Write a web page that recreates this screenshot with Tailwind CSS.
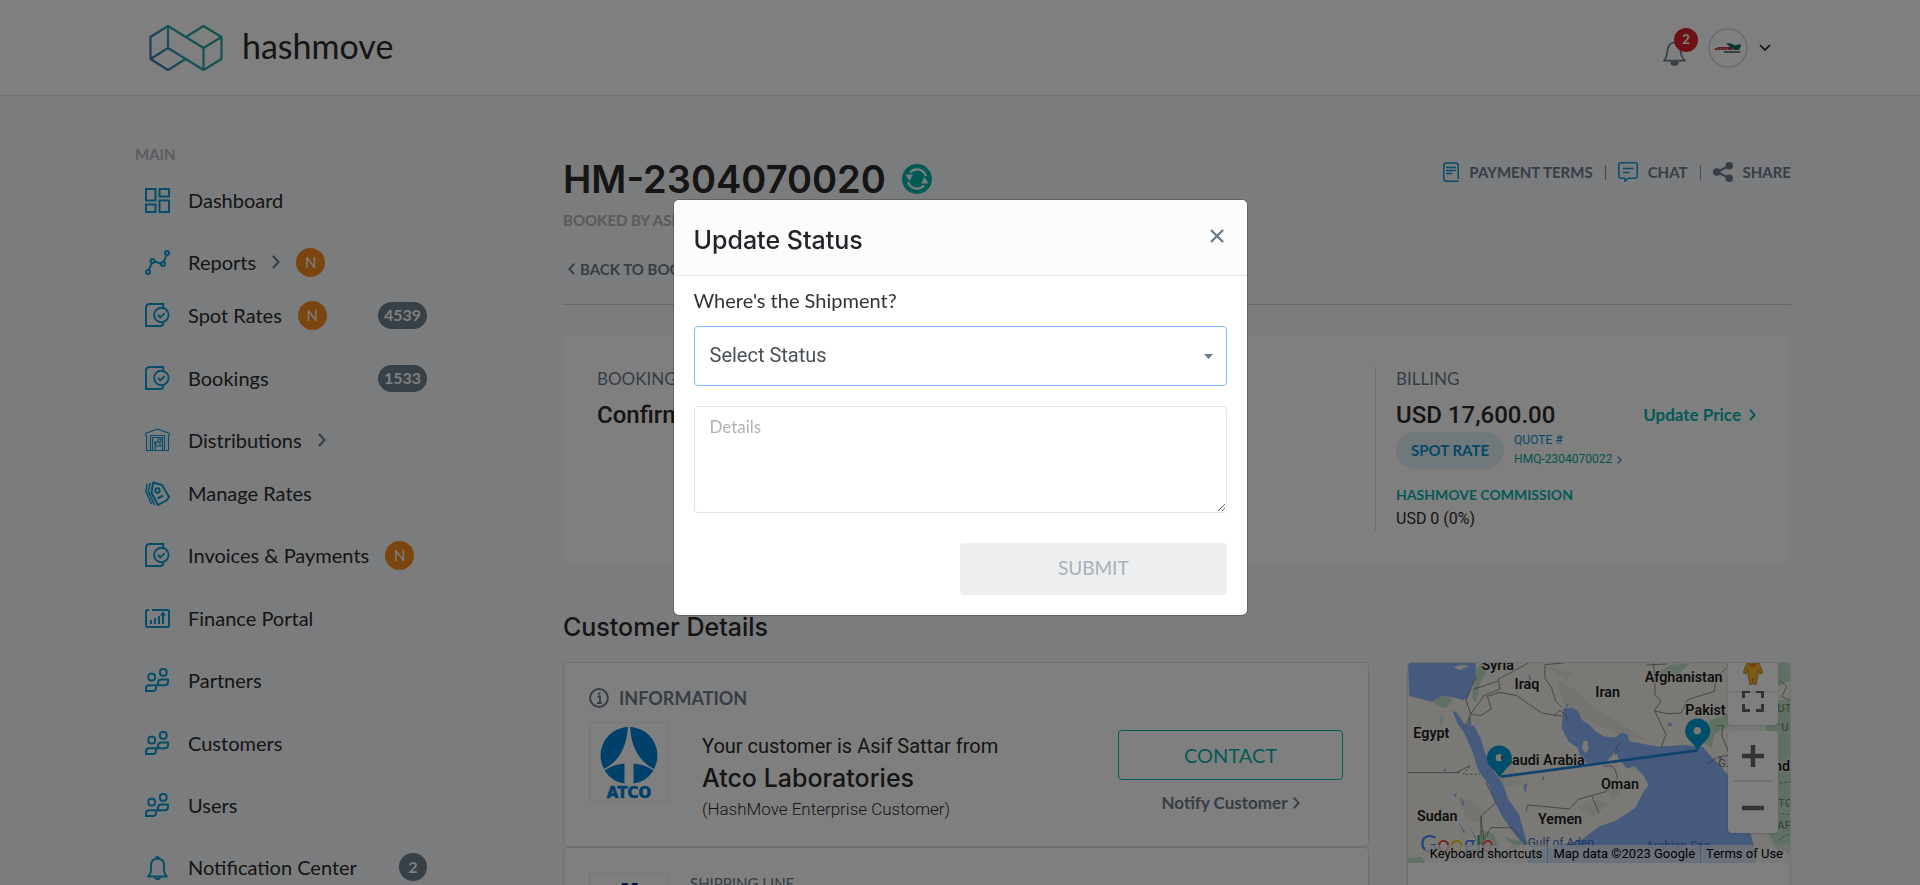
<!DOCTYPE html>
<html lang="en">
<head>
<meta charset="utf-8">
<meta name="viewport" content="width=device-width, initial-scale=1">
<title>HashMove - Booking HM-2304070020</title>
<script src="https://cdn.jsdelivr.net/npm/@tailwindcss/browser@4"></script>
</head>
<body class="h-screen overflow-hidden bg-[#f7f9fc] font-['Lato',sans-serif] text-[#2b2b2b]">

<svg class="hidden" aria-hidden="true">
  <symbol id="i-doc" viewBox="0 0 26 26"><g fill="none" stroke="currentColor" stroke-width="2"><path d="M19 5V1H5Q1 1 1 5V24H16Q19 24 19 20.500"/><circle cx="17" cy="12.500" r="7.500"/><path d="M13.500 12.500l2.500 2.500 4.500-4.500"/></g></symbol>
  <symbol id="i-people" viewBox="0 0 26 26"><g fill="none" stroke="currentColor" stroke-width="2"><rect x="15.500" y="1" width="7" height="7" rx="2.800"/><rect x="3.500" y="6" width="7" height="7" rx="2.800"/><path d="M13.500 18V15.500Q13.500 12 17 12H24V14.500Q24 18 20.500 18Z"/><path d="M1 24V21.500Q1 18 4.500 18H11.500V20.500Q11.500 24 8 24Z"/></g></symbol>
  <symbol id="i-right" viewBox="0 0 8 14"><path d="M1.500 1.500L6.500 7l-5 5.500" fill="none" stroke="currentColor" stroke-width="2.200" stroke-linecap="round" stroke-linejoin="round"/></symbol>
</svg>

<header class="flex h-24 items-center justify-between border-b border-[#dcdcdc] bg-white pl-[149px] pr-[149px]">
  <a href="#" class="flex items-center gap-[18px]" aria-label="hashmove home">
    <svg class="h-12 w-[75px]" viewBox="0 0 75 48" fill="none" stroke="url(#lg)" stroke-width="2.200" stroke-linejoin="round">
      <defs><linearGradient id="lg" gradientUnits="userSpaceOnUse" x1="0" y1="44" x2="74" y2="4"><stop offset="0" stop-color="#3c6fb6"/><stop offset=".45" stop-color="#2fa3b0"/><stop offset="1" stop-color="#1ea896"/></linearGradient></defs>
      <path d="M1.500 13L19 2l35.500 22v22L19 24 1.500 35Z"/><path d="M19 2v22M1.500 35L19 46l17.500-11M37 13L54.500 2 72.500 13 54.500 24M72.500 13v22L54.500 46"/>
    </svg>
    <span class="pb-1 text-[34px] leading-10 text-[#2b2b2b]">hashmove</span>
  </a>
  <div class="flex items-center">
    <button type="button" class="relative h-10 w-[26px] text-[#6f7f8f]" aria-label="Notifications, 2 new">
      <svg class="mt-[10px] h-[26px] w-[25px]" viewBox="0 0 26 26" fill="none" stroke="currentColor" stroke-width="1.800" stroke-linejoin="round"><path d="M2 21Q5 18 5.500 12 6 3 12.500 2 19 3 19.500 12 20 18 24 21Z"/><path d="M9.500 22.500a3.500 3 0 0 0 7 0Z" fill="currentColor"/></svg>
      <span class="absolute top-0 left-3 flex size-6 items-center justify-center rounded-full bg-[#d8232a] text-[13px] font-bold text-white">2</span>
    </button>
    <button type="button" class="ml-5 flex items-center gap-[11px]" aria-label="Account menu">
      <span class="flex size-10 items-center justify-center rounded-full border-2 border-[#dcdcdc] bg-white">
        <svg class="h-3 w-7" viewBox="0 0 28 12"><path d="M1 6.500L5 5H18v3H0Z" fill="#c0353a"/><path d="M12 1q6 0 9 2.500L26 2l1 2-2 4h-5l-3-2Z" fill="#12685f"/><path d="M10 10h16" stroke="#3b5560" stroke-width="1.500"/><path d="M3 7h12" stroke="#fff" stroke-width=".6" stroke-dasharray="2 1"/></svg>
      </span>
      <svg class="h-[7px] w-3" viewBox="0 0 12 7" fill="none" stroke="#222" stroke-width="1.700"><path d="M1 1l5 5 5-5"/></svg>
    </button>
  </div>
</header>

<div class="flex">
  <nav class="w-[563px] shrink-0 pt-12 pl-[135px]" aria-label="Main">
    <h2 class="text-[15px] leading-5 font-bold text-[#b4b8bc]">MAIN</h2>
    <ul class="mt-[5px] w-[292px] text-[20px] leading-[26px]">
      <li class="h-[62px] pt-[18px]"><a href="#" class="flex h-[26px] items-center"><svg class="mr-[18px] ml-[10px] size-[25px] text-[#0a9bd0]" viewBox="0 0 25 25" fill="none" stroke="currentColor" stroke-width="2"><path d="M1 1h9.500v11.500H1ZM14.500 1H24v7.500h-9.500ZM1 16.500h9.500V24H1ZM14.500 12.500H24V24h-9.500Z"/></svg>Dashboard</a></li>
      <li class="h-[53px] pt-[18px]"><a href="#" class="flex h-[26px] items-center"><svg class="mr-[18px] ml-[10px] size-[25px] text-[#0a9bd0]" viewBox="0 0 25 25" fill="none" stroke="currentColor" stroke-width="2"><circle cx="3" cy="22" r="2"/><circle cx="7.500" cy="11" r="2"/><circle cx="18" cy="14" r="2"/><circle cx="22" cy="3" r="2"/><path d="M3.800 20L7 13M9.500 11.500l6.500 2M18.800 12L21.500 5"/></svg>Reports<svg class="ml-4 h-[14px] w-2 text-[#6b7c8c]"><use href="#i-right"/></svg><span class="ml-4 flex size-[29px] items-center justify-center rounded-full bg-[#f58a1c] text-[15px] text-white">N</span></a></li>
      <li class="h-[63px] pt-[18px]"><a href="#" class="flex h-[26px] items-center"><svg class="mr-[18px] ml-[10px] size-[25px] text-[#0a9bd0]"><use href="#i-doc"/></svg>Spot Rates<span class="ml-4 flex size-[29px] items-center justify-center rounded-full bg-[#f58a1c] text-[15px] text-white">N</span><span class="ml-auto flex h-[27px] items-center rounded-full bg-[#6f7f8f] px-[6px] text-[16px] font-bold text-white">4539</span></a></li>
      <li class="h-[62px] pt-[18px]"><a href="#" class="flex h-[26px] items-center"><svg class="mr-[18px] ml-[10px] size-[25px] text-[#0a9bd0]"><use href="#i-doc"/></svg>Bookings<span class="ml-auto flex h-[27px] items-center rounded-full bg-[#6f7f8f] px-[6px] text-[16px] font-bold text-white">1533</span></a></li>
      <li class="h-[53px] pt-[18px]"><a href="#" class="flex h-[26px] items-center"><svg class="mr-[18px] ml-[10px] size-[25px] text-[#0a9bd0]" viewBox="0 0 25 25" fill="none" stroke="currentColor" stroke-width="1.100"><path d="M.5 7.500v-2L12.500 1l12 4.500v2M1.500 7v15.500h22V7M5.500 22V7.500h14V22M7.500 22V9.500h10V22M10 22v-4h7M10 18v-4h5v4M13 14v-3h3v3M9 14h2v3"/></svg>Distributions<svg class="ml-4 h-[14px] w-2 text-[#6b7c8c]"><use href="#i-right"/></svg></a></li>
      <li class="h-[62px] pt-[18px]"><a href="#" class="flex h-[26px] items-center"><svg class="mr-[18px] ml-[10px] size-[25px] text-[#0a9bd0]" viewBox="0 0 25 25" fill="none" stroke="currentColor" stroke-width="2" stroke-linejoin="round"><path d="M8 1.500L17 4l7 12-2 3-9 5L6.500 12Z"/><circle cx="12.500" cy="9.500" r="2.200"/><path d="M12.500 17.500l5.500-3"/><path d="M5 2L3.500 10.500 9.500 24M2 3L1 10.500 6.500 23" stroke-width="1.600"/></svg>Manage Rates</a></li>
      <li class="h-[63px] pt-[18px]"><a href="#" class="flex h-[26px] items-center"><svg class="mr-[18px] ml-[10px] size-[25px] text-[#0a9bd0]"><use href="#i-doc"/></svg>Invoices &amp; Payments<span class="ml-4 flex size-[29px] items-center justify-center rounded-full bg-[#f58a1c] text-[15px] text-white">N</span></a></li>
      <li class="h-[62px] pt-[18px]"><a href="#" class="flex h-[26px] items-center"><svg class="mr-[18px] ml-[10px] size-[25px] text-[#0a9bd0]" viewBox="0 0 25 25" fill="none" stroke="currentColor" stroke-width="2"><path d="M4 4H2.500Q1 4 1 5.500V19.500Q1 21 2.500 21H22.500Q24 21 24 19.500V5.500Q24 4 22.500 4H7"/><path d="M6 18v-4M10 18v-6M14 18v-8M18 18V8M16 9.500l2-2.500 2 2.500"/></svg>Finance Portal</a></li>
      <li class="h-[63px] pt-[18px]"><a href="#" class="flex h-[26px] items-center"><svg class="mr-[18px] ml-[10px] size-[25px] text-[#0a9bd0]"><use href="#i-people"/></svg>Partners</a></li>
      <li class="h-[62px] pt-[18px]"><a href="#" class="flex h-[26px] items-center"><svg class="mr-[18px] ml-[10px] size-[25px] text-[#0a9bd0]"><use href="#i-people"/></svg>Customers</a></li>
      <li class="h-[62px] pt-[18px]"><a href="#" class="flex h-[26px] items-center"><svg class="mr-[18px] ml-[10px] size-[25px] text-[#0a9bd0]"><use href="#i-people"/></svg>Users</a></li>
      <li class="pt-[18px]"><a href="#" class="flex h-[26px] items-center"><svg class="mr-[18px] ml-[10px] size-[25px] text-[#0a9bd0]" viewBox="0 0 25 25" fill="none" stroke="currentColor" stroke-width="1.900" stroke-linejoin="round"><path d="M3 21.500Q6 19 6 14V10Q6 4 12.500 3.500 19 4 19 10v4Q19 19 22 21.500Z"/><path d="M11 3.500a1.500 1.500 0 0 1 3 0M10 22a2.500 2 0 0 0 5 0"/></svg>Notification Center<span class="ml-auto flex size-7 items-center justify-center rounded-full bg-[#6f7f8f] text-[16px] font-bold text-white">2</span></a></li>
    </ul>
  </nav>

  <main class="min-w-0 flex-1 pt-[59px] pr-[129px]">
    <div class="flex items-start justify-between">
      <div>
        <h1 class="flex items-center gap-4 font-['Inter',sans-serif] text-[38px] leading-[48px] font-semibold">HM-2304070020
          <button type="button" class="block size-[30px] text-[#05b5ab]" aria-label="Refresh"><svg viewBox="0 0 30 30"><circle cx="15" cy="15" r="15" fill="currentColor"/><g fill="none" stroke="#f7f9fc" stroke-width="2.200"><path d="M8 8.500A9.500 9.500 0 0 1 24 12M22 21.500A9.500 9.500 0 0 1 6 18"/></g><path d="M3.500 10.500l7.500 0-3.500 6.500ZM26.500 19.500l-7.500 0 3.500-6.500Z" fill="#f7f9fc"/></svg></button>
        </h1>
        <p class="mt-[7px] text-[15px] leading-5 font-bold text-[#b4b4b4]">BOOKED BY ASIF SATTAR</p>
        <a href="#" class="mt-[29px] flex items-center gap-[5px] pl-[5px] text-[15px] leading-5 font-bold text-[#6b7c8c]"><svg class="h-3 w-[7px] rotate-180"><use href="#i-right"/></svg>BACK TO BOOKINGS</a>
      </div>
      <div class="mt-[7px] flex items-center text-[15px] leading-5 font-bold text-[#6b7c8c]">
        <a href="#" class="flex items-center gap-[10px]"><svg class="h-5 w-4 text-[#0a9bd0]" viewBox="0 0 16 20" fill="none" stroke="currentColor" stroke-width="1.500"><path d="M15.200 17V3.500Q15.200 1 12.500 1H3.500Q.8 1 .8 3.500V16.500Q.8 19.200 3.500 19.200H15.500"/><path d="M3 5.500h10M3 8.500h10M3 11.500h6.500"/></svg>PAYMENT TERMS</a>
        <span class="mx-3 h-[15px] w-px bg-[#8f8a86]"></span>
        <a href="#" class="flex items-center gap-[10px]"><svg class="size-5 text-[#0a9bd0]" viewBox="0 0 20 20" fill="none" stroke="currentColor" stroke-width="1.500" stroke-linejoin="round"><path d="M2.500.8h15q1.700 0 1.700 1.700v12q0 1.700-1.700 1.700h-7L7 19.200V16.200H2.500Q.8 16.200.8 14.500v-12Q.8.8 2.500.8Z"/><path d="M5 6.500h10.500M5 10.500h6.500"/></svg>CHAT</a>
        <span class="mx-3 h-[15px] w-px bg-[#8f9ab0]"></span>
        <a href="#" class="flex items-center gap-[10px]"><svg class="size-5" viewBox="0 0 20 20"><path d="M16 4L4 10l12 6" fill="none" stroke="currentColor" stroke-width="2"/><g fill="currentColor"><circle cx="16.200" cy="3.800" r="3.800"/><circle cx="3.800" cy="10" r="3.800"/><circle cx="16.200" cy="16.200" r="3.800"/></g></svg>SHARE</a>
      </div>
    </div>
    <hr class="mt-[25px] border-[#d3d3d6]">

    <section class="mt-[30px] mr-[2px] flex h-[229px] justify-between rounded-sm border border-[#eef2f5] bg-white px-8 py-[31px]">
      <div class="w-[400px] pl-px">
        <h2 class="text-[17px] leading-6 text-[#6b7c8c]">BOOKING STATUS</h2>
        <p class="mt-2 font-['Roboto',sans-serif] text-[24px] leading-8 font-medium">Confirmed</p>
      </div>
      <div class="w-[381px] border-l border-[#dfe1e3] pl-5">
        <h2 class="text-[17px] leading-6 text-[#6b7c8c]">BILLING</h2>
        <div class="mt-2 flex items-center justify-between font-['Roboto',sans-serif] text-[24px] leading-8 font-medium">USD 17,600.00
          <a href="#" class="flex items-center gap-2 font-['Lato',sans-serif] text-[17px] font-bold text-[#05b5ab]">Update Price<svg class="h-3 w-[7px]"><use href="#i-right"/></svg></a>
        </div>
        <div class="flex items-center gap-[10px]">
          <span class="rounded-full bg-[#e0f1f8] px-[15px] pt-2 pb-[9px] text-[15px] leading-5 font-bold text-[#0a8fd0]">SPOT RATE</span>
          <div class="font-['Roboto',sans-serif] text-[12px] leading-[19px] text-[#0a8fd0]">
            <div>QUOTE #</div>
            <a href="#" class="flex items-center gap-[5px] text-[#05a59b]">HMQ-2304070022<svg class="h-2 w-[5px] text-[#3f7fdc]"><use href="#i-right"/></svg></a>
          </div>
        </div>
        <h3 class="mt-4 text-[14px] leading-5 font-bold text-[#05b5ab]">HASHMOVE COMMISSION</h3>
        <p class="mt-1 font-['Roboto',sans-serif] text-[16px] leading-5">USD 0 (0%)</p>
      </div>
    </section>

    <h2 class="mt-[47px] font-['Inter',sans-serif] text-[25px] leading-8 font-medium">Customer Details</h2>
    <div class="mt-[19px] flex items-start gap-[38px]">
      <div class="min-w-0 flex-1">
        <section class="h-[185px] rounded border border-[#dbdfe2] bg-white px-[25px] pt-[23px]">
          <h3 class="flex items-center gap-[10px] text-[18px] leading-6 font-bold text-[#6b7c8c]"><svg class="size-5" viewBox="0 0 20 20"><circle cx="10" cy="10" r="8.900" fill="none" stroke="currentColor" stroke-width="2"/><path d="M8.500 8.500h2.500V15M8 15h5M9 5.500h2.500" fill="none" stroke="currentColor" stroke-width="1.800"/></svg>INFORMATION</h3>
          <div class="mt-3 flex items-start">
            <div class="flex size-20 shrink-0 items-start justify-center border border-[#ececec] pt-1">
              <svg class="h-[72px] w-[60px]" viewBox="0 0 60 72" role="img" aria-label="ATCO"><g fill="#0083d6"><path d="M29 0A28.500 28.500 0 0 0 5 42Q27 31 29 0ZM31 0A28.500 28.500 0 0 1 55 42Q33 31 31 0ZM5.500 43.500Q15 37 25.500 36.500V56.500Q13 55 5.500 43.500ZM54.500 43.500Q45 37 34.500 36.500V56.500Q47 55 54.500 43.500Z"/><text x="30" y="71" text-anchor="middle" font-family="DejaVu Sans" font-weight="bold" font-size="15" stroke="#0083d6" stroke-width=".6">ATCO</text></g></svg>
            </div>
            <div class="ml-[33px] font-['Roboto',sans-serif]">
              <p class="mt-3 text-[20px] leading-6">Your customer is Asif Sattar from</p>
              <p class="mt-1 font-['Inter',sans-serif] text-[25px] leading-8 font-medium">Atco Laboratories</p>
              <p class="mt-[3px] text-[17px] leading-6 font-light">(HashMove Enterprise Customer)</p>
            </div>
            <div class="mt-2 ml-auto flex w-[225px] flex-col items-center">
              <button type="button" class="h-[50px] w-full rounded border border-[#05b5ab] text-[20px] text-[#05b5ab]">CONTACT</button>
              <a href="#" class="mt-[11px] flex items-center gap-[5px] text-[17px] leading-6 font-bold text-[#6b7c8c]">Notify Customer<svg class="h-3 w-[7px]"><use href="#i-right"/></svg></a>
            </div>
          </div>
        </section>
        <section class="flex h-[185px] rounded border border-[#dbdfe2] bg-white px-[25px] pt-[25px]">
          <div class="flex size-20 shrink-0 justify-center border border-[#ececec] pt-[9px]"><svg class="h-8 w-5" viewBox="0 0 20 32" fill="#0b2f78"><path d="M3 0h6L5 14H0ZM13 0h6l-4 14h-5Z"/></svg></div>
          <h3 class="ml-[21px] text-[15px] leading-5 text-[#6b7c8c]">SHIPPING LINE</h3>
        </section>
      </div>

      <section class="h-[400px] w-[384px] shrink-0 rounded border border-[#dbdfe2] bg-white" aria-label="Route map">
        <div class="relative h-[200px] overflow-hidden rounded-t">
          <svg class="h-full w-full" viewBox="54 69 1146 600" preserveAspectRatio="xMidYMid slice">
            <rect x="54" y="69" width="1146" height="600" fill="#f5f2eb"/>
            <g fill="#ebe7df"><path d="M500 120l60 30 60 60 90 50 60 40-80-15-90-40-80-60ZM290 320l70 50 40 60-50 10-50-60ZM200 470l60 20 20 50-40 10ZM560 500l60-20 40 10-50 40ZM470 80l80 20-20 20ZM640 430l60 20-30 30Z"/></g>
            <g fill="#c0e2c8"><path d="M255 90l20-21h30l-35 60-12 60-12-15ZM125 185l35-20 30 15-25 25-15-5ZM150 230l10-5-5 40ZM270 570l40 10 20 45-50 44-30-20ZM1010 69h60v35l-50 30ZM1100 69h100v55l-50 20ZM1130 180h70v450h-40l-30-60-25-60 20-200ZM960 240l55-20v40l-40 20-10 40-25-10ZM980 400l35-5 5 35-30-10ZM54 655l40-5 10 19H54ZM340 590l60 15-20 20ZM800 100l40-25 60-6-40 40Z"/></g>
            <g fill="#8ab4f8">
              <path d="M54 69H258l-2 40-22 60-14 12-35-10-30-3-30 17-67-17Z"/>
              <path d="M187 212l12 5 25 35 10 3 18 2 20 38 12 42 30 60 25 35 15 45 32 45 12 40 14 50-10 4-30-36-36-52-20-40-20-53-30-42-20-62-25-55-19-26Z"/>
              <path d="M234 255l7-35 3 33Z"/>
              <path d="M520 205l25-2 17 8 15 30 20 12 20 22 30 15 30 2 15-14 20 4 7 22 85 16 75-5 60 6 25 30 25 22 20 30 30 38 15 24 15 65 24 93 8 70H410l10-60 60-10 95-24 50-38 50-18 60-38 20-40 20-30-12-25-30-32-22 8-25-30-10-22-30 35-36 5-35-10-12-40-28-20-20-40Z"/>
              <path d="M400 435l12-5-6 30ZM213 470l10 20-6 8ZM190 460l10 5-4 8ZM415 100l8 15-5 10ZM835 245l15 10-15 5ZM985 350l12-3-6 20ZM525 190l10 3-4 12ZM160 390l8-6-2 12ZM205 545l20 30-3 6ZM240 560l22 40-4 3Z"/>
            </g>
            <path d="M188 82l30-8 18 4-25 12ZM580 303l12 0 4 25-10 12-10-15Z" fill="#f5f2eb"/>
            <g fill="none" stroke="#7c7b79" stroke-width="2.500" stroke-linejoin="round">
              <path d="M54 398H210M240 377l-40 20M258 110l-30 70 14 42 40-55 48-20-5-30 30-15 60-33M250 148l75-25M242 222l30 5 32-20-12-38 38-12 50 10 75 52 30 5 35 5M520 69l-55 5 0 40 20 30 12 40 20 18M490 228l20-18 20 20 0 15M242 222l-15 35M640 378l25 0 10 10 8 25-35 42-45 12-40 12-25 28-60-6-65-6-5 20M605 467l22 52M675 345l5-25 12-12M790 69l5 40 0 55 18 20-20 27 35 72-15 40M793 213l40 8 40-2 20-40 80-25 5-40 30-30M980 258l20-2-5 30 15 35 8 25-35 5-30 20M318 488l-45 40 0 85 30-50 65 0 42 50M272 530l10 70 30 50 20-10 40-20M318 488l-30-60M770 75l60-3M1170 120l20 20-15 30 25 10M460 420l0-10"/>
              <path d="M1120 69l40 60 0 60 25 20M1165 250l35 20M1170 430l30-5M1175 520l25 5M1165 600l35-20M240 378l-20 25h50" stroke-dasharray="8 5"/>
            </g>
            <path d="M454 69v600" stroke="#e8e4dc" stroke-width="1.500"/>
            <g font-family="Roboto, sans-serif" font-weight="600" font-size="43" fill="#1c1c1c" stroke="#f8f6f0" stroke-width="5" paint-order="stroke" text-anchor="middle">
              <text x="323" y="90">Syria</text><text x="411" y="147">Iraq</text><text x="653" y="171">Iran</text><text x="881" y="125">Afghanistan</text><text x="124" y="295">Egypt</text><text x="462" y="375">Saudi Arabia</text><text x="690" y="447">Oman</text><text x="142" y="542">Sudan</text><text x="510" y="551">Yemen</text><text x="886" y="224" text-anchor="start">Pakist</text><text x="1140" y="393" text-anchor="start">India</text>
            </g>
            <g font-family="Roboto, sans-serif" font-size="34" fill="#777"><text x="1162" y="217">UT</text><text x="1174" y="272">U</text><text x="985" y="382">G.</text><text x="1165" y="502">TG</text><text x="1162" y="567">AP</text><text x="1155" y="642">TN</text></g>
            <g font-family="Roboto, sans-serif" font-size="36" fill="#3f70c4"><text x="413" y="622">Gulf of Aden</text><text x="768" y="629">Arabian Sea</text></g>
            <path d="M332 410L454 394 923 331" fill="none" stroke="#2087dc" stroke-width="8"/>
            <g fill="#009fd4"><path id="pin" d="M328 412Q320 398 303 382A37.500 37.500 0 1 1 353 382Q338 398 328 412Z"/><use href="#pin" x="595" y="-81"/></g>
            <circle cx="328" cy="353" r="11" fill="#f5f2eb"/><circle cx="922" cy="272" r="11" fill="#f5f2eb"/><path d="M334 344a11 11 0 0 1 0 18Z" fill="#222"/>
            <g font-family="Lato, sans-serif" font-size="70" stroke="#fff" stroke-width="4" paint-order="stroke"><text x="90" y="636"><tspan fill="#4285f4">G</tspan><tspan fill="#ea4335">o</tspan><tspan fill="#fbbc04">o</tspan><tspan fill="#4285f4">g</tspan><tspan fill="#34a853">l</tspan><tspan fill="#ea4335">e</tspan></text></g>
          </svg>
          <div class="absolute top-0 right-3 w-[50px]">
            <button type="button" class="relative z-10 block h-7 w-full bg-white shadow" aria-label="Street View"><svg class="mx-auto h-[22px] w-5 -translate-y-[3px]" viewBox="0 0 20 22"><path d="M4 0h12l4 10-3 1-2-4 0 5-2 10H11l-1-7-1 7H7L5 12V7L3 11 0 10Z" fill="#f9b529" stroke="#b97d12" stroke-width=".8"/><path d="M6 1l4 4 4-4Z" fill="#e07b28"/></svg></button>
            <button type="button" class="block h-[34px] w-full overflow-hidden rounded-b-sm bg-white shadow" aria-label="Toggle fullscreen"><svg class="mx-auto h-[22px] w-[22px] -translate-y-[7px]" viewBox="0 0 22 22" fill="none" stroke="#666" stroke-width="3"><path d="M1.500 8V1.500H8M14 1.500h6.500V8M20.500 14v6.500H14M8 20.500H1.500V14"/></svg></button>
            <div class="mt-[6px] rounded-sm bg-white px-[6px] shadow">
              <button type="button" class="flex h-[51px] w-full items-center justify-center border-b-2 border-[#e0e0e0]" aria-label="Zoom in"><svg class="size-[22px]" viewBox="0 0 22 22" stroke="#666" stroke-width="4.500"><path d="M0 11h22M11 0v22"/></svg></button>
              <button type="button" class="flex h-[51px] w-full items-center justify-center" aria-label="Zoom out"><svg class="size-[22px]" viewBox="0 0 22 22" stroke="#666" stroke-width="4.500"><path d="M0 11h22"/></svg></button>
            </div>
          </div>
          <div class="absolute right-0 bottom-0 flex h-[18px] items-center bg-[#f5f5f5]/70 font-['Roboto',sans-serif] text-[13px] leading-[18px] whitespace-nowrap text-black">
            <a href="#" class="px-[5px]">Keyboard shortcuts</a><span class="border-x border-[#8ab4f8] px-[5px]">Map data ©2023 Google</span><a href="#" class="pr-[7px] pl-[5px]">Terms of Use</a>
          </div>
        </div>
      </section>
    </div>
  </main>
</div>

<div class="fixed inset-0 z-20 flex items-start justify-center bg-black/50 pt-[199px]">
  <form role="dialog" aria-modal="true" aria-labelledby="dlg-title" class="w-[575px] overflow-hidden rounded-md border border-black/20 bg-white bg-clip-padding">
    <div class="flex h-[76px] items-start justify-between border-b border-[#e5e7e9] bg-[#fcfcfc] px-5 pt-6">
      <h2 id="dlg-title" class="font-['Inter',sans-serif] text-[25px] leading-8 font-medium text-[#212529]">Update Status</h2>
      <button type="button" class="mt-[5px] mr-[3px] block size-[14px] text-[#6b7c8c]" aria-label="Close"><svg viewBox="0 0 14 14" fill="none" stroke="currentColor" stroke-width="2.400"><path d="M1 1l12 12M13 1L1 13"/></svg></button>
    </div>
    <div class="px-5 pt-3 pb-5">
      <label for="status" class="block text-[20px] leading-6 text-[#333]">Where's the Shipment?</label>
      <div class="relative mt-[14px]">
        <select id="status" class="h-[60px] w-full appearance-none rounded border border-[#80bdff] bg-white px-[15px] pb-[2px] font-['Roboto',sans-serif] text-[20px] text-[#495057] outline-none"><option>Select Status</option></select>
        <svg class="pointer-events-none absolute top-7 right-[14px] h-[5px] w-[9px]" viewBox="0 0 9 5"><path d="M0 0h9L4.500 5Z" fill="#6b7c8c"/></svg>
      </div>
      <label for="details" class="sr-only">Details</label>
      <textarea id="details" placeholder="Details" class="mt-5 block h-[107px] w-full rounded border border-[#e3e5ea] bg-white px-[15px] py-2 text-[17px] leading-6 outline-none placeholder:text-[#b3b3b3]"></textarea>
      <div class="mt-[30px] flex justify-end">
        <button type="submit" disabled class="h-[52px] w-1/2 rounded-sm bg-[#eceef0] pb-[2px] text-[19px] text-[#a5b1bc]">SUBMIT</button>
      </div>
    </div>
  </form>
</div>
</body>
</html>
